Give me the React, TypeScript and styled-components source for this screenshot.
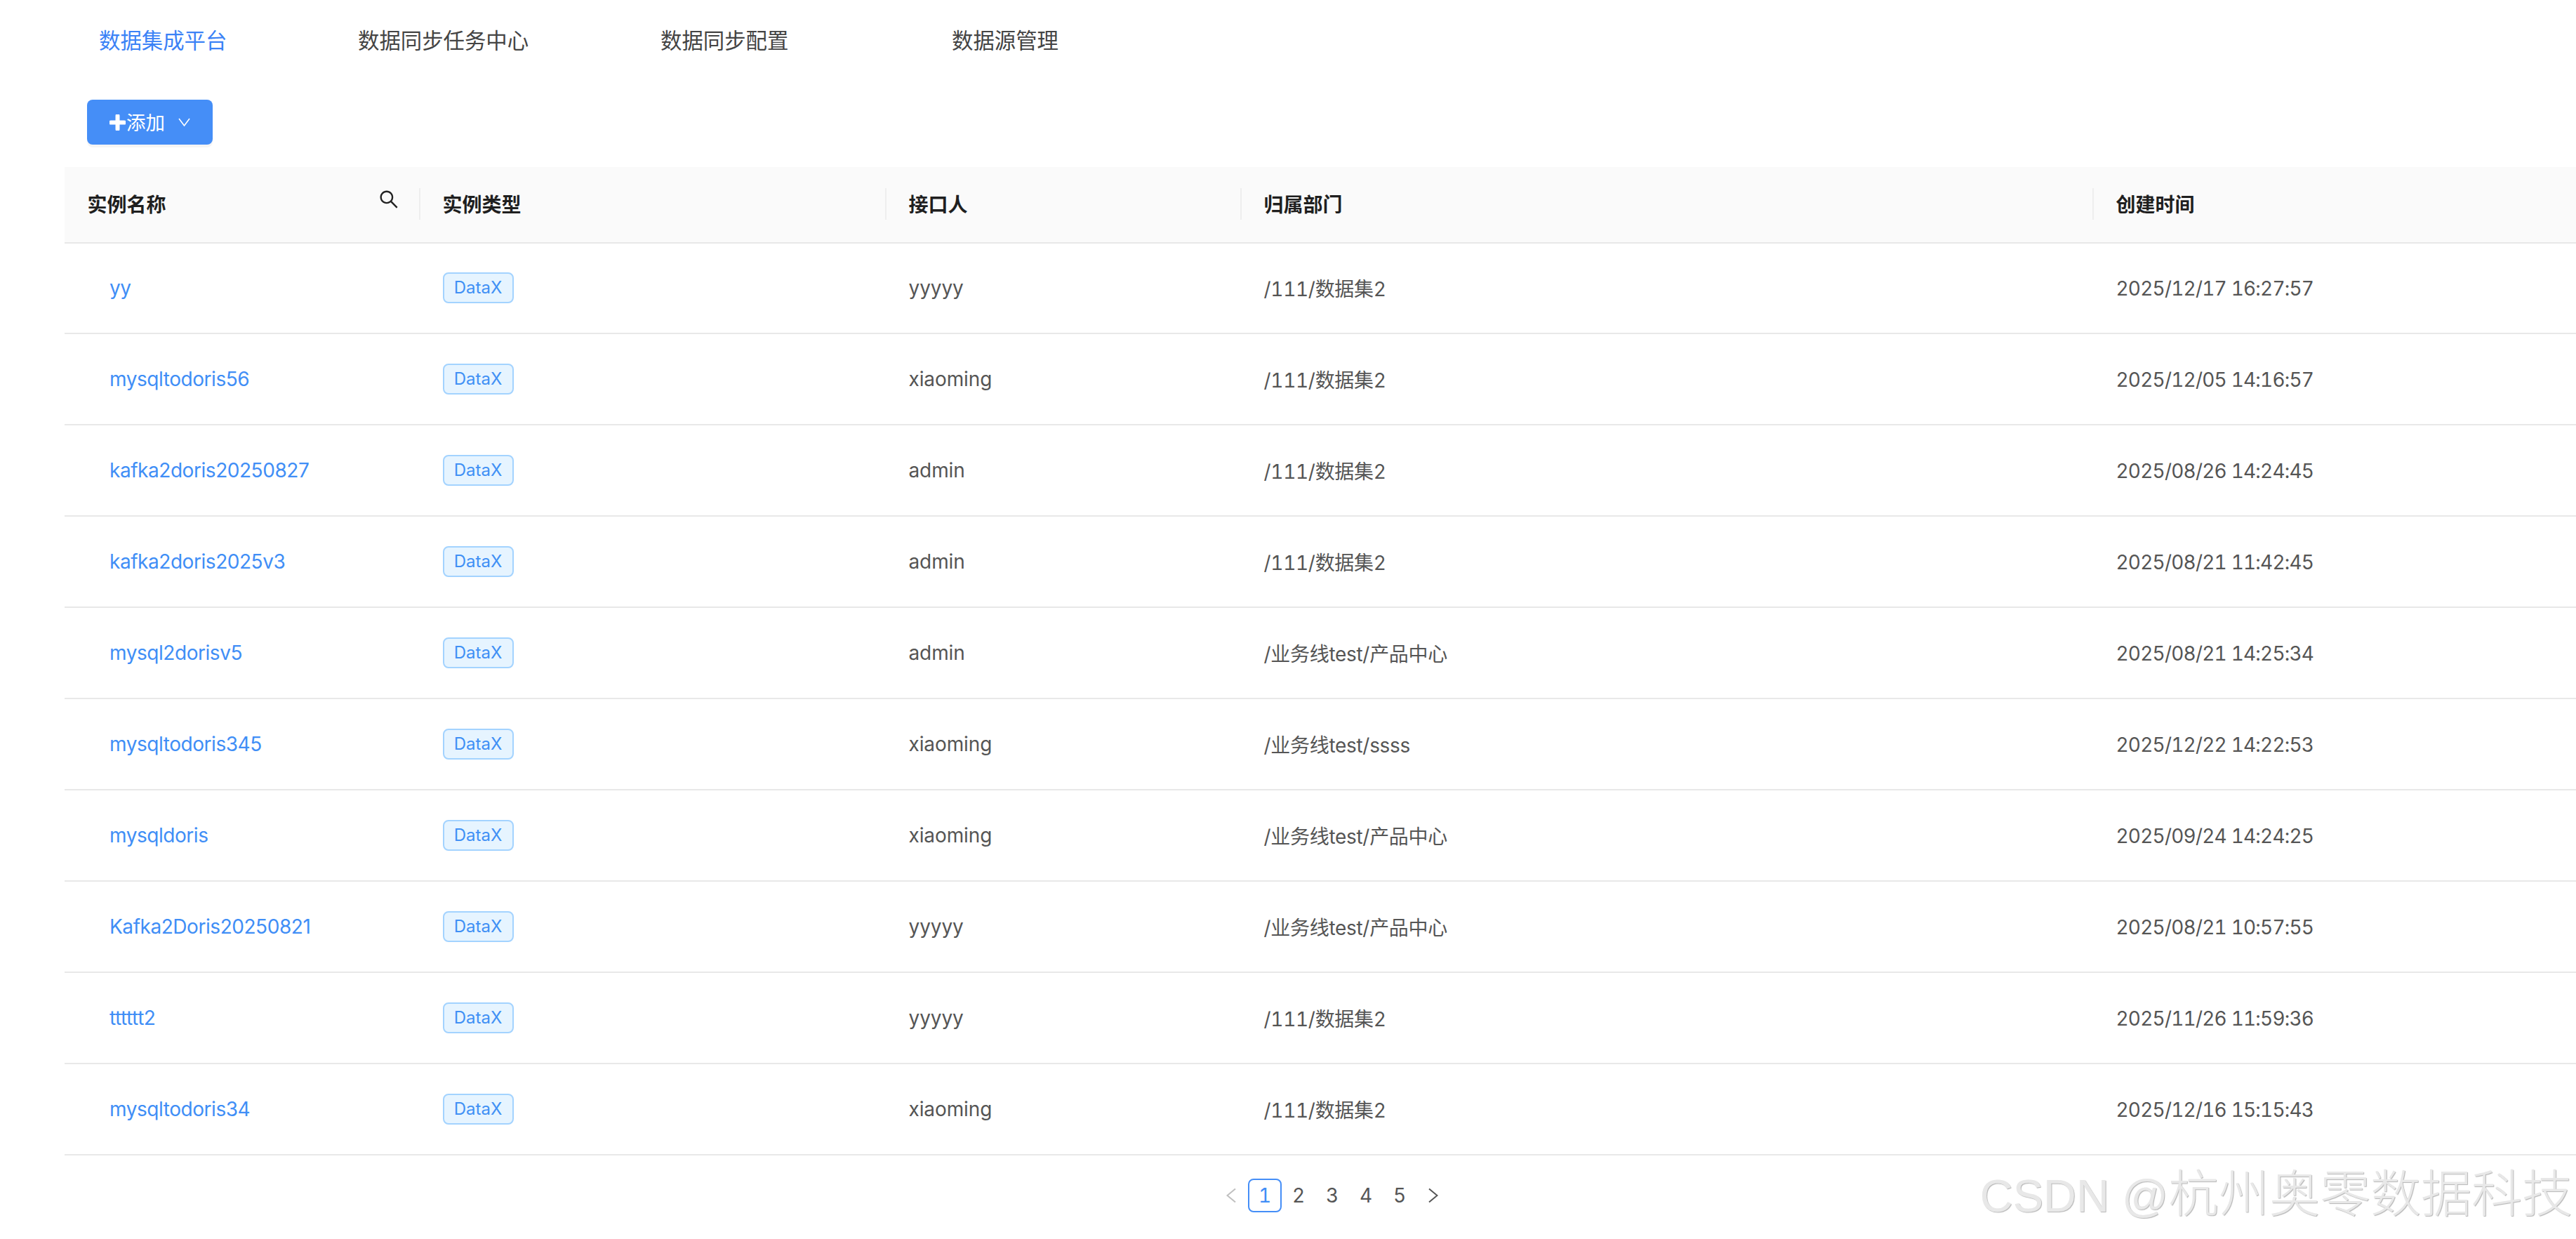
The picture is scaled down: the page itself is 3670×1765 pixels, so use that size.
import React from "react";
import styled, { createGlobalStyle } from "styled-components";
import { AiOutlineSearch } from "react-icons/ai";

const Global = createGlobalStyle`
  html, body { margin: 0; padding: 0; background: #fff; }
  body { font-family: Inter, "Noto Sans CJK SC", sans-serif; overflow: hidden; }
`;

const COLS = "506px 664px 506px 1214px 688px";

const Page = styled.div`
  position: relative;
  width: 3670px;
  height: 1765px;
  box-sizing: border-box;
  padding-left: 92px;
  overflow: hidden;
`;

const Tabs = styled.nav`
  display: flex;
  height: 112px;
  align-items: center;
  padding-left: 49px;
`;

const Tab = styled.div<{ $w: number; $active?: boolean }>`
  width: ${(p) => p.$w}px;
  font-size: 30.4px;
  color: ${(p) => (p.$active ? "#3b82f6" : "#444")};
`;

const Toolbar = styled.div`
  display: flex;
  padding: 30px 0 32px 32px;
`;

const AddButton = styled.button`
  display: flex;
  align-items: center;
  justify-content: flex-start;
  box-sizing: border-box;
  width: 179px;
  height: 64px;
  padding: 0 0 0 32px;
  border: none;
  border-radius: 8px;
  background: #458ef7;
  box-shadow: 0 4px 0 rgba(0, 0, 0, 0.04);
  color: #fff;
  font-family: inherit;
  font-size: 27.5px;
`;

const ButtonLabel = styled.span`
  margin: -2px 19px 0 1px;
`;

const HeadRow = styled.div`
  display: grid;
  grid-template-columns: ${COLS};
  height: 107px;
  background: #fafafa;
  border-bottom: 2px solid #e8e8e8;
  margin-bottom: -1px;
`;

const HeadCell = styled.div<{ $sep?: boolean }>`
  position: relative;
  display: flex;
  align-items: center;
  padding: 0 0 3px 32.5px;
  font-size: 28px;
  font-weight: 600;
  color: #1f1f1f;
  &::before {
    content: "";
    display: ${(p) => (p.$sep ? "block" : "none")};
    position: absolute;
    left: -1px;
    top: 30px;
    height: 45px;
    width: 2px;
    background: #eeeeee;
  }
`;

const SearchButton = styled.span`
  position: absolute;
  right: 28px;
  top: 30px;
  display: flex;
  color: #222;
`;

const Row = styled.div`
  display: grid;
  grid-template-columns: ${COLS};
  height: 128px;
  align-items: center;
  border-bottom: 2px solid #e8e8e8;
`;

const Cell = styled.div`
  padding-left: 32.5px;
  font-size: 28px;
  color: #555;
  letter-spacing: -0.1px;
`;

const DeptCell = styled(Cell)`
  font-variant-numeric: tabular-nums;
  letter-spacing: -0.3px;
`;

const TimeCell = styled(Cell)`
  font-variant-numeric: tabular-nums;
  letter-spacing: -0.8px;
  margin-top: 1px;
`;

const NameLink = styled.a`
  display: block;
  padding-left: 64px;
  font-size: 28px;
  color: #408ef6;
  letter-spacing: -0.45px;
`;

const TypeTag = styled.span`
  display: inline-block;
  box-sizing: border-box;
  height: 44px;
  width: 101px;
  line-height: 40px;
  text-align: center;
  font-size: 24px;
  letter-spacing: 0;
  color: #4090f5;
  background: #e6f4ff;
  border: 2px solid #a3d3ff;
  border-radius: 8px;
`;

const Pager = styled.div`
  display: flex;
  justify-content: center;
  padding: 33px 0 0 34px;
`;

const PageItem = styled.div<{ $active?: boolean }>`
  display: flex;
  align-items: center;
  justify-content: center;
  box-sizing: border-box;
  width: 48px;
  height: 48px;
  font-size: 28px;
  font-variant-numeric: tabular-nums;
  color: ${(p) => (p.$active ? "#408ef6" : "#555")};
  border: ${(p) => (p.$active ? "2px solid #458ef7" : "none")};
  border-radius: 8px;
`;

const Watermark = styled.div`
  position: absolute;
  right: 5px;
  bottom: 19px;
  font-family: "Liberation Sans", "Noto Sans CJK SC", sans-serif;
  font-size: 72px;
  font-weight: 300;
  line-height: 84px;
  color: #e8e8e8;
  text-shadow: 1px 1px 1px #b5b5b5;
  white-space: nowrap;
`;

const Latin = styled.span`
  font-size: 65px;
`;

const rows = [
  ["yy", "yyyyy", "/111/数据集2", "2025/12/17 16:27:57"],
  ["mysqltodoris56", "xiaoming", "/111/数据集2", "2025/12/05 14:16:57"],
  ["kafka2doris20250827", "admin", "/111/数据集2", "2025/08/26 14:24:45"],
  ["kafka2doris2025v3", "admin", "/111/数据集2", "2025/08/21 11:42:45"],
  ["mysql2dorisv5", "admin", "/业务线test/产品中心", "2025/08/21 14:25:34"],
  ["mysqltodoris345", "xiaoming", "/业务线test/ssss", "2025/12/22 14:22:53"],
  ["mysqldoris", "xiaoming", "/业务线test/产品中心", "2025/09/24 14:24:25"],
  ["Kafka2Doris20250821", "yyyyy", "/业务线test/产品中心", "2025/08/21 10:57:55"],
  ["tttttt2", "yyyyy", "/111/数据集2", "2025/11/26 11:59:36"],
  ["mysqltodoris34", "xiaoming", "/111/数据集2", "2025/12/16 15:15:43"],
];

const Chevron = ({ dir, color }: { dir: "left" | "right"; color: string }) => (
  <svg width="14" height="22" viewBox="0 0 14 22" fill="none">
    <path d={dir === "left" ? "M13 1.5 L1.5 11 L13 20.5" : "M1 1.5 L12.5 11 L1 20.5"} stroke={color} strokeWidth="2" />
  </svg>
);

export default function App() {
  return (
    <Page>
      <Global />
      <Tabs>
        <Tab $w={369} $active>数据集成平台</Tab>
        <Tab $w={431}>数据同步任务中心</Tab>
        <Tab $w={415}>数据同步配置</Tab>
        <Tab $w={200}>数据源管理</Tab>
      </Tabs>
      <Toolbar>
        <AddButton>
          <svg width="23" height="23" viewBox="0 0 23 23">
            <path d="M11.5 2 V21 M2 11.5 H21" stroke="#fff" strokeWidth="6" strokeLinecap="round" />
          </svg>
          <ButtonLabel>添加</ButtonLabel>
          <svg width="17" height="12" viewBox="0 0 17 12" fill="none">
            <path d="M1 1 L8.5 11 L16 1" stroke="#fff" strokeWidth="1.6" />
          </svg>
        </AddButton>
      </Toolbar>
      <HeadRow>
        <HeadCell>
          实例名称
          <SearchButton><AiOutlineSearch size={32} /></SearchButton>
        </HeadCell>
        <HeadCell $sep>实例类型</HeadCell>
        <HeadCell $sep>接口人</HeadCell>
        <HeadCell $sep>归属部门</HeadCell>
        <HeadCell $sep>创建时间</HeadCell>
      </HeadRow>
      {rows.map((r) => (
        <Row key={r[0]}>
          <NameLink>{r[0]}</NameLink>
          <Cell><TypeTag>DataX</TypeTag></Cell>
          <Cell>{r[1]}</Cell>
          <DeptCell>{r[2]}</DeptCell>
          <TimeCell>{r[3]}</TimeCell>
        </Row>
      ))}
      <Pager>
        <PageItem><Chevron dir="left" color="#bfbfbf" /></PageItem>
        <PageItem $active>1</PageItem>
        <PageItem>2</PageItem>
        <PageItem>3</PageItem>
        <PageItem>4</PageItem>
        <PageItem>5</PageItem>
        <PageItem><Chevron dir="right" color="#555" /></PageItem>
      </Pager>
      <Watermark><Latin>CSDN @</Latin>杭州奥零数据科技</Watermark>
    </Page>
  );
}
